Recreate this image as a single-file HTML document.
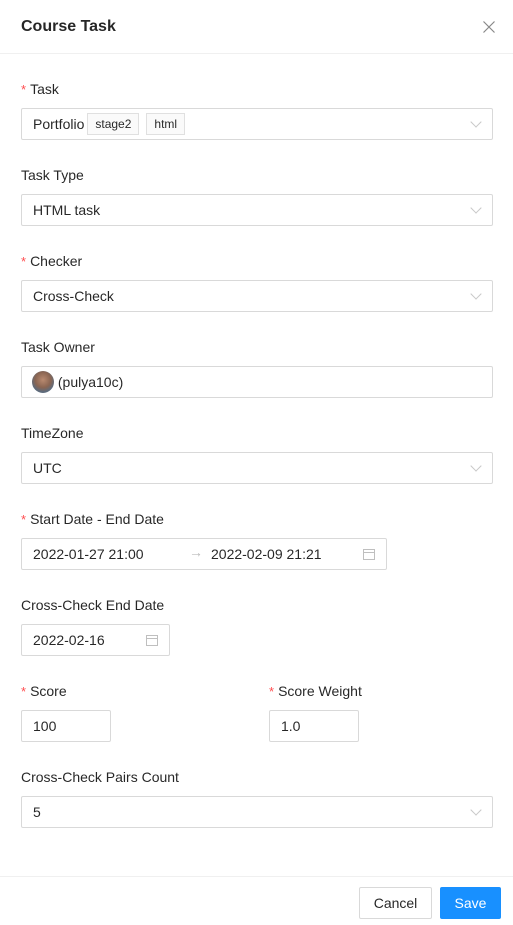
<!DOCTYPE html>
<html><head><style>
*{box-sizing:border-box;margin:0;padding:0}
body{width:513px;height:925px;background:#fff;font-family:"Liberation Sans",sans-serif;font-size:14px;color:rgba(0,0,0,.85);position:relative;overflow:hidden}
.a{position:absolute}
.lbl{position:absolute;left:21px;line-height:20px}
.req{color:#ff4d4f;margin-right:4px;font-size:13px}
.in{position:absolute;left:21px;width:472px;height:32px;border:1px solid #d9d9d9;border-radius:2px;padding:0 11px;line-height:30px;background:#fff}
.arr{position:absolute;right:12px;top:9px;width:8px;height:8px;border-right:1px solid #c8c8c8;border-bottom:1px solid #c8c8c8;transform:rotate(45deg)}
.tag{display:inline-block;height:22px;line-height:20px;border:1px solid #e0e0e0;background:#fafafa;font-size:12px;padding:0 7px;margin-left:3px;vertical-align:middle;position:relative;top:-1px}
.cal{position:absolute;width:12px;height:11px;border:1px solid #bfbfbf;top:10px}
.cal:before{content:"";position:absolute;left:0;right:0;top:2px;border-top:1px solid #bfbfbf}
</style></head><body>
<div class="a" style="left:21px;top:16px;font-size:16px;font-weight:bold;color:rgba(0,0,0,.85);line-height:22px">Course Task</div>
<svg class="a" style="left:483px;top:21px" width="12" height="12" viewBox="0 0 12 12"><path d="M0.5 0.5L11.5 11.5M11.5 0.5L0.5 11.5" stroke="#888" stroke-width="1.2"/></svg>
<div class="a" style="left:0;top:53px;width:513px;border-top:1px solid #f0f0f0"></div>

<div class="lbl" style="top:79px"><span class="req">*</span>Task</div>
<div class="in" style="top:108px">Portfolio<span class="tag">stage2</span><span class="tag" style="margin-left:7px">html</span><div class="arr"></div></div>

<div class="lbl" style="top:165px">Task Type</div>
<div class="in" style="top:194px">HTML task<div class="arr"></div></div>

<div class="lbl" style="top:251px"><span class="req">*</span>Checker</div>
<div class="in" style="top:280px">Cross-Check<div class="arr"></div></div>

<div class="lbl" style="top:337px">Task Owner</div>
<div class="in" style="top:366px;padding-left:10px"><span style="display:inline-block;width:22px;height:22px;border-radius:50%;background:radial-gradient(circle at 50% 40%,#b98a70 0,#8a6552 45%,#5d6b7c 70%);vertical-align:middle;position:relative;top:-1px"></span> (pulya10c)</div>

<div class="lbl" style="top:423px">TimeZone</div>
<div class="in" style="top:452px">UTC<div class="arr"></div></div>

<div class="lbl" style="top:509px"><span class="req">*</span>Start Date - End Date</div>
<div class="in" style="top:538px;width:366px">2022-01-27 21:00<span class="a" style="left:167px;top:-2px;color:#bbb">→</span><span class="a" style="left:189px">2022-02-09 21:21</span><div class="cal" style="left:341px"></div></div>

<div class="lbl" style="top:595px">Cross-Check End Date</div>
<div class="in" style="top:624px;width:149px">2022-02-16<div class="cal" style="left:124px"></div></div>

<div class="lbl" style="top:681px"><span class="req">*</span>Score</div>
<div class="in" style="top:710px;width:90px">100</div>
<div class="lbl" style="top:681px;left:269px"><span class="req">*</span>Score Weight</div>
<div class="in" style="top:710px;left:269px;width:90px">1.0</div>

<div class="lbl" style="top:767px">Cross-Check Pairs Count</div>
<div class="in" style="top:796px">5<div class="arr"></div></div>

<div class="a" style="left:0;top:876px;width:513px;border-top:1px solid #f0f0f0"></div>
<div class="a" style="left:359px;top:887px;width:73px;height:32px;border:1px solid #d9d9d9;border-radius:2px;text-align:center;line-height:30px">Cancel</div>
<div class="a" style="left:440px;top:887px;width:61px;height:32px;background:#1890ff;border-radius:2px;color:#fff;text-align:center;line-height:32px">Save</div>
</body></html>
